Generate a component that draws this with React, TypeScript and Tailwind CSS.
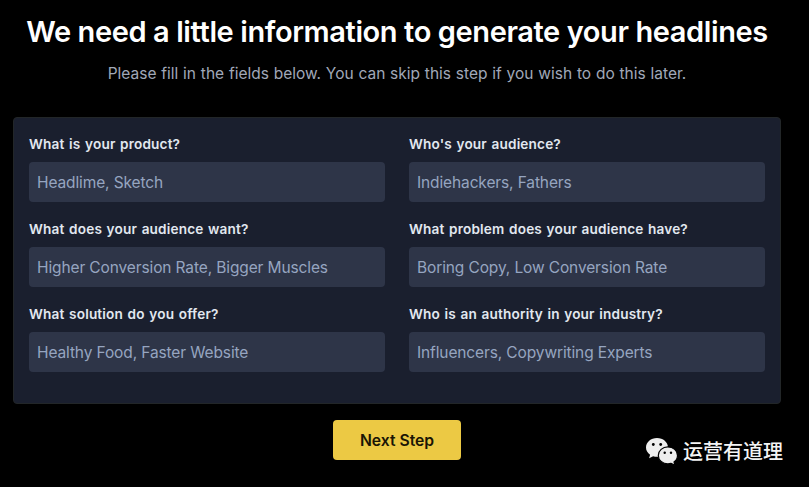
type Field = {
  id: string;
  label: string;
  placeholder: string;
};

const fields: Field[] = [
  { id: 'product', label: 'What is your product?', placeholder: 'Headlime, Sketch' },
  { id: 'audience', label: "Who's your audience?", placeholder: 'Indiehackers, Fathers' },
  { id: 'want', label: 'What does your audience want?', placeholder: 'Higher Conversion Rate, Bigger Muscles' },
  { id: 'problem', label: 'What problem does your audience have?', placeholder: 'Boring Copy, Low Conversion Rate' },
  { id: 'solution', label: 'What solution do you offer?', placeholder: 'Healthy Food, Faster Website' },
  { id: 'authority', label: 'Who is an authority in your industry?', placeholder: 'Influencers, Copywriting Experts' },
];

function TextField({ id, label, placeholder }: Field) {
  return (
    <div>
      <label
        htmlFor={id}
        className="block text-[13.6px] leading-5 font-semibold tracking-[0.17px] text-[#e2e8f0] [word-spacing:1px]"
      >
        {label}
      </label>
      <input
        id={id}
        type="text"
        placeholder={placeholder}
        className="mt-2 block h-10 w-full rounded-sm bg-[#2e3548] px-2 text-[15.5px] tracking-[-0.12px] text-white placeholder:text-[#96a5c0]"
      />
    </div>
  );
}

function ChatBubbles() {
  return (
    <svg width="32" height="28" viewBox="0 0 32 28" aria-hidden="true">
      <path
        fill="#eee"
        d="M11 0C4.900 0 0 4.200 0 9.400c0 3 1.600 5.500 4.100 7.300L3.100 20.300l4-2.100c1.300.4 2.600.6 3.900.6 6.100 0 11-4.200 11-9.400S17.100 0 11 0z"
      />
      <path
        fill="#eee"
        stroke="#000"
        strokeWidth="1.2"
        d="M31.500 17.400c0-4.700-4.300-8.500-9.600-8.500s-9.600 3.800-9.600 8.500 4.300 8.500 9.600 8.500c1.100 0 2.200-.2 3.200-.5l3.900 1.900-1-3.300c2.200-1.600 3.500-4 3.500-6.600z"
      />
      <circle cx="7.300" cy="6.500" r="1.400" />
      <circle cx="14.700" cy="6.500" r="1.400" />
      <circle cx="18.700" cy="14.800" r="1.200" />
      <circle cx="25" cy="14.800" r="1.200" />
    </svg>
  );
}

export default function App() {
  return (
    <div className="relative h-[487px] w-[809px] overflow-hidden bg-black pl-[13px] font-['Inter',sans-serif]">
      <main className="w-[768px]">
        <h1 className="pt-3 text-center text-[29px] leading-10 font-semibold tracking-[-0.4px] whitespace-nowrap text-white">
          We need a little information to generate your headlines
        </h1>
        <p className="mt-2.5 text-center text-[15.5px] leading-6 text-[#a0a8b8] [word-spacing:0.46px]">
          Please fill in the fields below. You can skip this step if you wish to do this later.
        </p>

        <form>
          <div className="mt-[31px] grid h-[287px] grid-cols-2 content-start gap-x-6 gap-y-[17px] rounded-sm border border-[#222628] bg-[#1a1f2e] px-[15px] pt-4">
            {fields.map((field) => (
              <TextField key={field.id} {...field} />
            ))}
          </div>
          <button
            type="button"
            className="mx-auto mt-4 block h-10 w-32 rounded-sm bg-[#ecc944] pt-0.5 text-[15.7px] font-semibold text-[#1a1505]"
          >
            Next Step
          </button>
        </form>
      </main>

      <div className="absolute top-[438px] left-[646px] flex items-start gap-[5px]">
        <ChatBubbles />
        <span className="font-['Noto_Sans_CJK_SC',sans-serif] text-xl leading-[26px] font-medium text-[#f4f4f4]">
          运营有道理
        </span>
      </div>
    </div>
  );
}
